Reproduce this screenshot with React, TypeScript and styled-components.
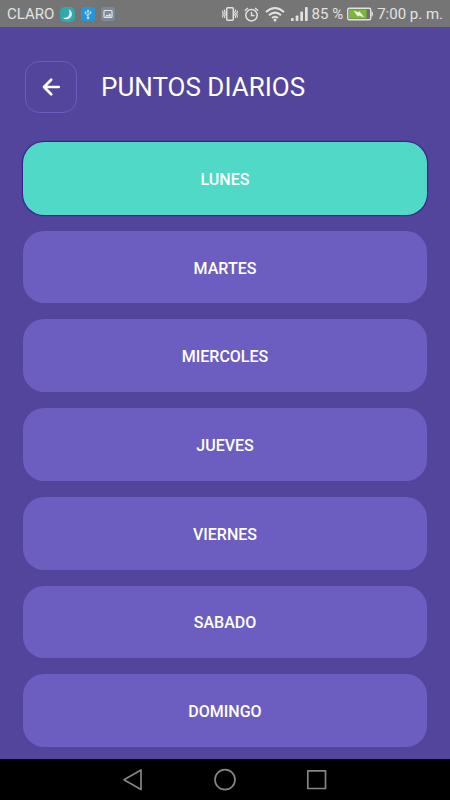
import React, { useState } from "react";
import styled, { createGlobalStyle } from "styled-components";

const GlobalStyle = createGlobalStyle`
  * { box-sizing: border-box; }
  body { margin: 0; background: #52459b; font-family: Roboto, "Noto Sans", sans-serif; }
  svg { display: block; flex: none; }
`;

const Screen = styled.div`
  min-height: 100vh;
  display: flex;
  flex-direction: column;
  background: #52459b;
  color: #fff;
`;

const StatusBar = styled.div`
  height: 27px;
  flex: none;
  display: flex;
  align-items: center;
  justify-content: space-between;
  padding: 1px 7px 0;
  background: #757575;
  color: #e2e2e2;
  font-size: 15px;
  line-height: 20px;
  white-space: nowrap;
`;

const StatusGroup = styled.div<{ $gap: number }>`
  display: flex;
  align-items: center;
  gap: ${({ $gap }) => $gap}px;
`;

const Content = styled.main`
  flex: 1;
  display: flex;
  flex-direction: column;
  padding: 34px 23px 12px;
`;

const Header = styled.header`
  display: flex;
  align-items: center;
  gap: 24px;
  padding-left: 2px;
  margin-bottom: 29px;
`;

const BackButton = styled.button`
  width: 52px;
  height: 52px;
  padding: 0;
  display: flex;
  align-items: center;
  justify-content: center;
  border: 1px solid #6b5cc0;
  border-radius: 14px;
  background: transparent;
  color: #fff;
  cursor: pointer;
`;

const Title = styled.h1`
  margin: 0;
  font-size: 26px;
  line-height: 32px;
  font-weight: 400;
`;

const DayList = styled.div`
  flex: 1;
  display: grid;
  grid-auto-rows: 1fr;
  gap: 16px;
`;

const DayButton = styled.button<{ $active: boolean }>`
  min-height: 56px;
  padding: 3px 16px 0;
  border: 0;
  border-radius: 21px;
  background: ${({ $active }) => ($active ? "#4fd9c6" : "#6c5dc0")};
  box-shadow: ${({ $active }) => ($active ? "0 0 1px 1px #361c85" : "none")};
  color: #fff;
  font-family: inherit;
  font-size: 16px;
  line-height: 20px;
  font-weight: 500;
  cursor: pointer;
`;

const NavBar = styled.nav`
  height: 41px;
  flex: none;
  display: flex;
  align-items: center;
  justify-content: center;
  gap: 68px;
  background: #000;
`;

const NavButton = styled.button`
  width: 24px;
  height: 24px;
  padding: 0;
  border: 0;
  background: transparent;
  color: #858585;
  cursor: pointer;
`;

const MoonIcon = () => (
  <svg width="15" height="15" viewBox="0 0 15 15">
    <rect width="15" height="15" rx="5" fill="#31a8ae" />
    <path d="M8.500 2.200a5.200 5.200 0 1 1-5.800 8.200c2.200.9 4.600.3 5.900-1.700 1.300-2 1.200-4.500-.1-6.500z" fill="#e6f3f2" />
  </svg>
);

const UsbIcon = () => (
  <svg width="14" height="14" viewBox="0 0 14 14">
    <rect width="14" height="14" rx="3" fill="#2796d8" />
    <path d="M7 3v8M4.500 5.500v1.500L7 9M9.500 5v1.500L7 8" stroke="#b9def5" fill="none" />
    <path d="M5.500 4.500L7 2.200l1.500 2.300z" fill="#b9def5" />
    <circle cx="7" cy="11" r="1.300" fill="#b9def5" />
    <circle cx="4.500" cy="5.500" r="1" fill="#b9def5" />
    <rect x="8.600" y="4.500" width="1.800" height="1.800" fill="#b9def5" />
  </svg>
);

const PictureIcon = () => (
  <svg width="14" height="14" viewBox="0 0 14 14">
    <rect width="14" height="14" rx="3" fill="#7d8a96" />
    <rect x="3" y="3.500" width="8" height="7" rx="1" fill="none" stroke="#e4e8eb" strokeWidth="1.200" />
    <path d="M4 9.500l2-2 1.300 1 1.500-2.500 1.500 3.500z" fill="#e4e8eb" />
  </svg>
);

const VibrateIcon = () => (
  <svg width="16" height="16" viewBox="0 0 16 16" fill="none" stroke="#e2e2e2">
    <rect x="4.700" y="1.700" width="6.600" height="12.600" rx="1" strokeWidth="1.500" />
    <path d="M2.500 3.500v1.500l.8 1.200-.8 1.300.8 1.300-.8 1.200v2M13.500 3.500v1.500l-.8 1.200.8 1.300-.8 1.300.8 1.200v2M.7 4.500v1.500l.6 1-.6 1 .6 1-.6 1v1.500M15.300 4.500v1.500l-.6 1 .6 1-.6 1 .6 1v1.500" strokeWidth="1.100" />
  </svg>
);

const AlarmIcon = () => (
  <svg width="15" height="15" viewBox="0 0 15 15" fill="none" stroke="#e2e2e2">
    <circle cx="7.500" cy="8.200" r="5.700" strokeWidth="1.500" />
    <path d="M7.500 5v3.500h3M.8 3.700L4 1M14.200 3.700L11 1" strokeWidth="1.400" />
  </svg>
);

const WifiIcon = () => (
  <svg width="20" height="16" viewBox="0 0 20 16" fill="none" stroke="#e2e2e2" strokeWidth="2">
    <path d="M1 6q9-8 18 0M4 9.200q6-5.200 12 0M7 12q3-2.500 6 0" />
    <circle cx="10" cy="14" r="1.500" fill="#e2e2e2" stroke="none" />
  </svg>
);

const SignalIcon = () => (
  <svg width="17" height="14" viewBox="0 0 17 14" fill="#e2e2e2">
    <rect y="11" width="2.700" height="3" rx=".7" />
    <rect x="4.700" y="8.500" width="2.700" height="5.500" rx=".7" />
    <rect x="9.300" y="4.500" width="2.700" height="9.500" rx=".7" />
    <rect x="14" width="2.700" height="14" rx=".7" />
  </svg>
);

const BatteryIcon = () => (
  <svg width="26" height="14" viewBox="0 0 26 14">
    <rect x=".7" y="1.200" width="23" height="11.600" rx="1.500" fill="#6f6f6f" stroke="#e2e2e2" strokeWidth="1.400" />
    <rect x="2" y="2.500" width="17.500" height="9" fill="#79bb30" />
    <path d="M24.500 4.200q1.500 0 1.500 2.800t-1.500 2.800z" fill="#e2e2e2" />
    <path d="M6.500 3.500l5 2 .9-1.300 4.900 6.300-5.300-2.100-1 1.300z" fill="#f2f5ee" />
  </svg>
);

const ArrowIcon = () => (
  <svg width="20" height="20" viewBox="0 0 20 20" fill="none" stroke="currentColor" strokeWidth="2.700" strokeLinecap="round" strokeLinejoin="round">
    <path d="M17.700 10H3M10.200 2.800L3 10l7.200 7.200" />
  </svg>
);

const days = ["LUNES", "MARTES", "MIERCOLES", "JUEVES", "VIERNES", "SABADO", "DOMINGO"];

export default function App() {
  const [selected, setSelected] = useState("LUNES");

  return (
    <>
      <GlobalStyle />
      <Screen>
        <StatusBar>
          <StatusGroup $gap={6}>
            <span>CLARO</span>
            <MoonIcon />
            <UsbIcon />
            <PictureIcon />
          </StatusGroup>
          <StatusGroup $gap={4}>
            <StatusGroup $gap={6}>
              <VibrateIcon />
              <AlarmIcon />
              <WifiIcon />
              <SignalIcon />
            </StatusGroup>
            <span>85 %</span>
            <BatteryIcon />
            <span>7:00 p. m.</span>
          </StatusGroup>
        </StatusBar>
        <Content>
          <Header>
            <BackButton type="button" aria-label="Volver">
              <ArrowIcon />
            </BackButton>
            <Title>PUNTOS DIARIOS</Title>
          </Header>
          <DayList>
            {days.map((day) => (
              <DayButton
                key={day}
                type="button"
                $active={day === selected}
                aria-pressed={day === selected}
                onClick={() => setSelected(day)}
              >
                {day}
              </DayButton>
            ))}
          </DayList>
        </Content>
        <NavBar>
          <NavButton type="button" aria-label="Atrás">
            <svg width="24" height="24" viewBox="0 0 24 24" fill="none" stroke="currentColor" strokeWidth="1.700" strokeLinejoin="round">
              <path d="M20 2v19.500L3 11.700z" />
            </svg>
          </NavButton>
          <NavButton type="button" aria-label="Inicio">
            <svg width="24" height="24" viewBox="0 0 24 24" fill="none" stroke="currentColor" strokeWidth="1.700">
              <circle cx="12" cy="11.700" r="10" />
            </svg>
          </NavButton>
          <NavButton type="button" aria-label="Recientes">
            <svg width="24" height="24" viewBox="0 0 24 24" fill="none" stroke="currentColor" strokeWidth="1.700" strokeLinejoin="round">
              <rect x="2.800" y="2.800" width="17.700" height="17.700" />
            </svg>
          </NavButton>
        </NavBar>
      </Screen>
    </>
  );
}
